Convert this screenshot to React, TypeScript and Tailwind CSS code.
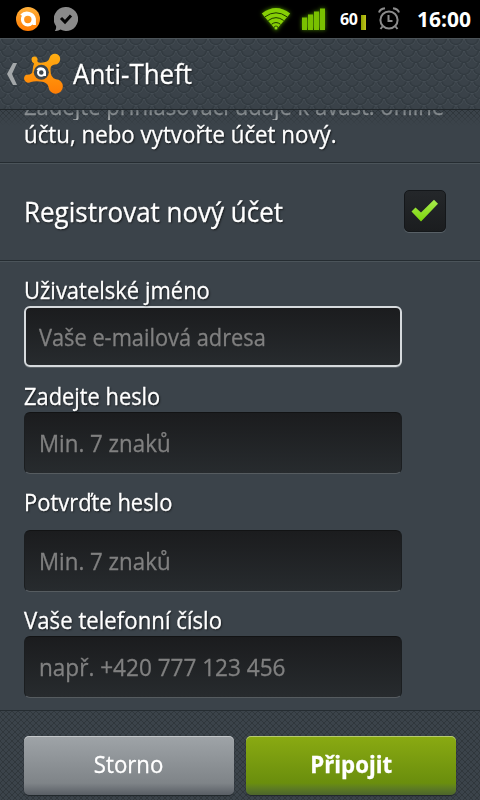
import type { ReactNode } from 'react'

const fields = [
  {
    id: 'user',
    label: 'Uživatelské jméno',
    labelFit: 'scale-x-[.916]',
    hint: 'Vaše e-mailová adresa',
    hintFit: 'scale-x-[.908]',
    box: 'mt-0',
    focused: true,
  },
  {
    id: 'pass',
    label: 'Zadejte heslo',
    labelFit: 'scale-x-[.91]',
    hint: 'Min. 7 znaků',
    hintFit: 'scale-x-[.93]',
    box: 'mt-0',
  },
  {
    id: 'pass2',
    label: 'Potvrďte heslo',
    labelFit: 'scale-x-[.914]',
    hint: 'Min. 7 znaků',
    hintFit: 'scale-x-[.93]',
    box: 'mt-3',
  },
  {
    id: 'phone',
    label: 'Vaše telefonní číslo',
    labelFit: 'scale-x-[.925]',
    hint: 'např. +420 777 123 456',
    hintFit: 'scale-x-[.94]',
    box: 'mt-0',
  },
]

function StatusBar() {
  return (
    <div className="flex h-[38px] shrink-0 items-center bg-black pl-4 text-white [-webkit-text-stroke:0]">
      {/* avast notification */}
      <svg width="24" height="24" viewBox="0 0 24 24" className="shrink-0">
        <defs>
          <linearGradient id="ball" x1="0" y1="0" x2="0" y2="1">
            <stop offset="0" stopColor="#ffb13b" />
            <stop offset="1" stopColor="#ff7a00" />
          </linearGradient>
        </defs>
        <circle cx="12" cy="12" r="12" fill="url(#ball)" />
        <path d="M5.500 8.500A7.300 6.700 0 0 1 18.300 12v6" fill="none" stroke="#fff" strokeWidth="3.200" />
        <circle cx="11.800" cy="12.500" r="5.300" fill="none" stroke="#fff" strokeWidth="3.200" />
      </svg>
      <svg width="24" height="24" viewBox="0 0 24 24" className="ml-[14px] shrink-0">
        <path d="M12 0a12 12 0 1 1-5.500 22.600Q4 24.200.8 24 2.600 21.500 2 19A12 12 0 0 1 12 0Z" fill="#8a8a8a" />
        <path d="m7 11 4 4 6-6.500" fill="none" stroke="#050505" strokeWidth="3" />
      </svg>

      {/* wifi, signal */}
      <svg width="30" height="24" viewBox="0 0 30 24" className="ml-[183px] shrink-0 drop-shadow-[0_0_2px_#4c8a00]">
        <path d="M15 23 .8 6.500Q15-4.500 29.200 6.500Z" fill="#86cf05" />
        <g fill="none" stroke="#1c3800" strokeWidth="1">
          <path d="M4 9.800Q15 1.800 26 9.800M7.300 13.500Q15 7.800 22.700 13.500M10.500 17.300Q15 13.800 19.500 17.300" />
        </g>
        <circle cx="15" cy="21" r="2" fill="#8fd810" stroke="#1c3800" strokeWidth=".8" />
      </svg>
      <svg width="24" height="22" viewBox="0 0 24 22" className="ml-[11px] shrink-0 drop-shadow-[0_0_2px_#4c8a00]">
        <path d="M0 9.500h5V22H0zM6 6.500h5V22H6zM12 3.500h5V22h-5zM18 .5h5V22h-5z" fill="#79c000" />
      </svg>
      <span className="ml-[14px] w-[18px] text-[16px] leading-none font-bold tracking-[-0.5px]">60</span>
      <span className="mt-[6px] ml-[3px] h-[15px] w-[5px] shrink-0 bg-linear-to-r from-[#8fa300] to-[#c3c51c]" />
      <svg width="22" height="24" viewBox="0 0 22 24" className="ml-[12px] shrink-0" fill="none" stroke="#8c8c8c" strokeWidth="2">
        <circle cx="11" cy="13" r="8.600" />
        <path d="M10.500 8v6h4M1 5.500Q2 2 7 1.300M21 5.500Q20 2 15 1.300M4.500 19.500 2.500 22M17.500 19.500l2 2.500" />
      </svg>
      <span className="ml-[17px] pt-px text-[21px] font-bold whitespace-nowrap">16:00</span>
    </div>
  )
}

function Header() {
  return (
    <header className="flex h-[72px] shrink-0 items-center border-t border-b border-t-[#4b5358] border-b-[#20262a] bg-[#3a4249] bg-[radial-gradient(ellipse_8px_7px_at_50%_0%,#3a4249_55%,#31393f_80%,#444d54_92%,#3a424900_100%),radial-gradient(ellipse_8px_7px_at_50%_0%,#3a4249_55%,#31393f_80%,#444d54_92%,#3a424900_100%)] bg-[size:16px_12px] bg-[position:0_0,8px_6px] pl-[6px]">
      <svg width="12" height="22" viewBox="0 0 12 22" className="shrink-0">
        <path d="M7 0h4L6 11l5 11H7L1 11Z" fill="#a3a7a9" />
      </svg>
      <svg width="42" height="42" viewBox="0 0 42 42" className="ml-[5px] shrink-0">
        <defs>
          <linearGradient id="splat" x1="0" y1="0" x2="0" y2="1">
            <stop offset="0" stopColor="#ffae12" />
            <stop offset="1" stopColor="#ff7d05" />
          </linearGradient>
        </defs>
        <path
          d="M11.500 3.500a3 3 0 0 1 2.700 4.500q.3 2 3.800 1.700Q25.500 9.500 26.500 5A5.400 5.400 0 1 1 32 11.500Q27 12 27.500 17 27.500 25 33 26.300A7.200 7.200 0 1 1 25.500 34Q24.500 29 17.500 28.500 11 28 8 29A4 4 0 1 1 3 21.700Q9 22.500 9.500 18 9.800 14 11 10.500 8.500 9 8.500 6.500a3 3 0 0 1 3-3Z"
          fill="url(#splat)"
        />
        <circle cx="18.300" cy="19.300" r="7.500" fill="#3d464d" />
        <circle cx="18.300" cy="19.500" r="3.300" fill="none" stroke="#fff" strokeWidth="2" />
        <path d="M14.300 17A4.300 4.300 0 0 1 22 19v4" fill="none" stroke="#fff" strokeWidth="2" />
      </svg>
      <h1 className="ml-2 origin-left scale-x-[.96] text-[27px]">Anti-Theft</h1>
    </header>
  )
}

function Button({ className, children }: { className: string; children: ReactNode }) {
  return (
    <button
      className={`h-[59px] w-[210px] rounded-[5px] pb-1 text-[24px] shadow-[inset_0_1px_0_#ffffff66,0_1px_1px_#20262a] ${className}`}
    >
      <span className="inline-block scale-x-[.925]">{children}</span>
    </button>
  )
}

export default function App() {
  return (
    <div className="flex h-[800px] w-[480px] flex-col overflow-hidden bg-[#3b434a] font-['Open_Sans',sans-serif] text-white [-webkit-text-stroke:0.3px] [text-shadow:1px_1px_2px_#000000b0]">
      <StatusBar />
      <Header />

      <main className="flex h-[600px] shrink-0 flex-col overflow-hidden">
        <div className="flex h-[53px] shrink-0 flex-col items-start justify-end overflow-hidden border-b border-[#252c31] bg-[linear-gradient(to_bottom,#3b434a00,#3b434a_16px),linear-gradient(45deg,transparent_44%,#2d3439_46%_54%,transparent_56%),linear-gradient(-45deg,transparent_44%,#2d3439_46%_54%,transparent_56%)] bg-[size:100%_100%,6px_6px,6px_6px] pb-[14px] pl-6 text-[24px] leading-[28px] whitespace-nowrap">
          <p className="origin-left scale-x-[.919] bg-linear-to-b from-[#4b5358] from-40% to-[#aaaeb0] bg-clip-text text-transparent [text-shadow:none]">
            Zadejte přihlašovací údaje k avast! online
          </p>
          <p className="origin-left scale-x-[.929]">účtu, nebo vytvořte účet nový.</p>
        </div>

        <div className="flex h-[98px] shrink-0 items-center justify-between border-t border-b border-t-[#4b545a] border-b-[#252c31] pr-[34px] pl-6">
          <span className="origin-left scale-x-[.962] text-[27px]">Registrovat nový účet</span>
          <span className="mb-[3px] flex size-[42px] items-center justify-center rounded-[5px] border border-[#14171a] bg-linear-to-b from-[#24272a] to-[#1b1d1f] shadow-[0_1px_0_#586066]">
            <svg width="28" height="24" viewBox="0 0 28 24">
              <defs>
                <linearGradient id="tick" x1="0" y1="0" x2="0" y2="1">
                  <stop offset="0" stopColor="#a9ec4d" />
                  <stop offset="1" stopColor="#7bd50c" />
                </linearGradient>
              </defs>
              <path d="m.5 12.500 4-4L10 13.500 23 .8l4 4L10 22.500Z" fill="url(#tick)" />
            </svg>
          </span>
        </div>

        <form className="flex flex-col border-t border-[#4b545a] pt-[14px] pl-6">
          {fields.map((f) => (
            <div key={f.id} className="mb-[14px] flex flex-col items-start">
              <label htmlFor={f.id} className={`h-[30px] origin-left text-[24px] leading-[28px] ${f.labelFit}`}>
                {f.label}
              </label>
              <div
                id={f.id}
                className={`flex w-[378px] items-center rounded-md bg-linear-to-b from-[#1b1c1e] to-[#272b2e] text-[24px] text-[#808080] [text-shadow:none] ${f.box} ${
                  f.focused
                    ? 'mb-px h-[61px] border-2 border-[#d6dadd] pt-px pl-[13px] shadow-[0_1px_0_#5b6267]'
                    : 'h-[62px] border border-x-[#1b1e20] border-t-[#121314] border-b-[#565c60] pl-[14px]'
                }`}
              >
                <span className={`origin-left ${f.hintFit}`}>{f.hint}</span>
              </div>
            </div>
          ))}
        </form>
      </main>

      <footer className="flex h-[90px] shrink-0 items-start gap-3 border-t border-[#252c31] bg-[#3b434a] bg-[linear-gradient(45deg,transparent_44%,#30373c_46%_54%,transparent_56%),linear-gradient(-45deg,transparent_44%,#30373c_46%_54%,transparent_56%)] bg-[size:6px_6px] pt-[25px] pl-6">
        <Button className="bg-linear-to-b from-[#9fa4a8] via-[#7f8488] via-80% to-[#595e65]">Storno</Button>
        <Button className="bg-linear-to-b from-[#8aaa12] via-[#6a8e0d] via-80% to-[#4d652b] font-bold">Připojit</Button>
      </footer>
    </div>
  )
}
